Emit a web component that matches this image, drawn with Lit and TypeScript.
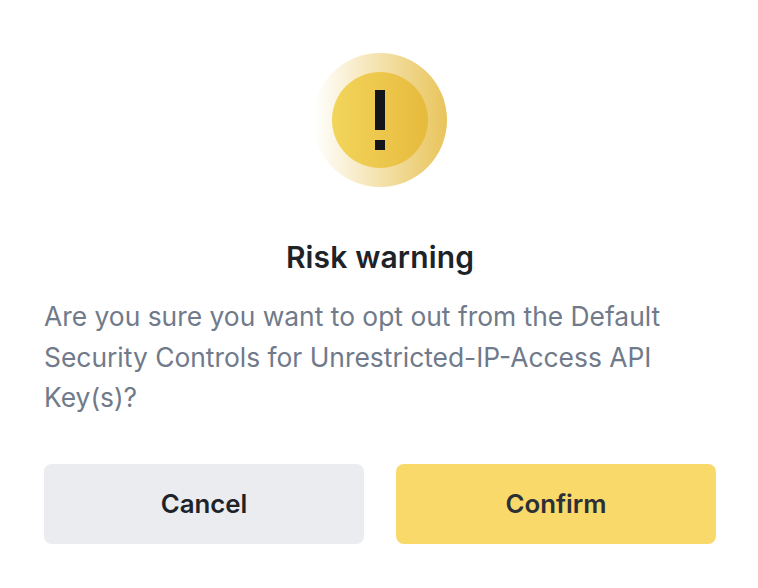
import { LitElement, html, css } from "lit";
import { customElement } from "lit/decorators.js";

@customElement("app-root")
export class AppRoot extends LitElement {
  static styles = css`
    :host { display: block; width: 758px; height: 588px; background: #fff; font-family: Inter, "Liberation Sans", sans-serif; }
    .dialog { box-sizing: border-box; height: 588px; padding: 52px 42px 0 44px; display: flex; flex-direction: column; }
    .icon { display: block; width: 136px; height: 136px; align-self: center; margin-bottom: 47px; }
    h1 { margin: 0 0 17px; font-size: 30px; line-height: 44px; font-weight: 600; color: #1e2329; text-align: center; letter-spacing: 0.15px; }
    p { margin: 0; font-size: 26.4px; line-height: 40.5px; color: #707a8a; }
    .actions { display: grid; grid-template-columns: 320px 320px; gap: 32px; margin-top: 46px; }
    button { height: 80px; border: 0; border-radius: 8px; font: 600 25.8px Inter, "Liberation Sans", sans-serif; color: #1e2329; padding: 0; }
    .cancel { background: #eaecef; }
    .confirm { background: #f8d96a; color: #2b2f36; }
  `;
  render() {
    return html`<div class="dialog">
      <svg class="icon" viewBox="0 0 136 136">
        <defs>
          <linearGradient id="ring" x1="0" x2="1" y1="0.5" y2="0.5"><stop offset="0" stop-color="#fff"/><stop offset="1" stop-color="#e9c45a"/></linearGradient>
          <linearGradient id="core" x1="0" x2="1" y1="0.5" y2="0.5"><stop offset="0" stop-color="#f3d55b"/><stop offset="1" stop-color="#e6ba3d"/></linearGradient>
        </defs>
        <circle cx="68" cy="68" r="67" fill="url(#ring)"/>
        <circle cx="68" cy="68" r="48" fill="url(#core)"/>
        <rect x="63" y="38" width="10" height="40" fill="#14151a"/>
        <rect x="63" y="88" width="10" height="10" fill="#14151a"/>
      </svg>
      <h1>Risk warning</h1>
      <p>Are you sure you want to opt out from the Default Security Controls for Unrestricted-IP-Access API Key(s)?</p>
      <div class="actions"><button class="cancel">Cancel</button><button class="confirm">Confirm</button></div>
    </div>`;
  }
}
